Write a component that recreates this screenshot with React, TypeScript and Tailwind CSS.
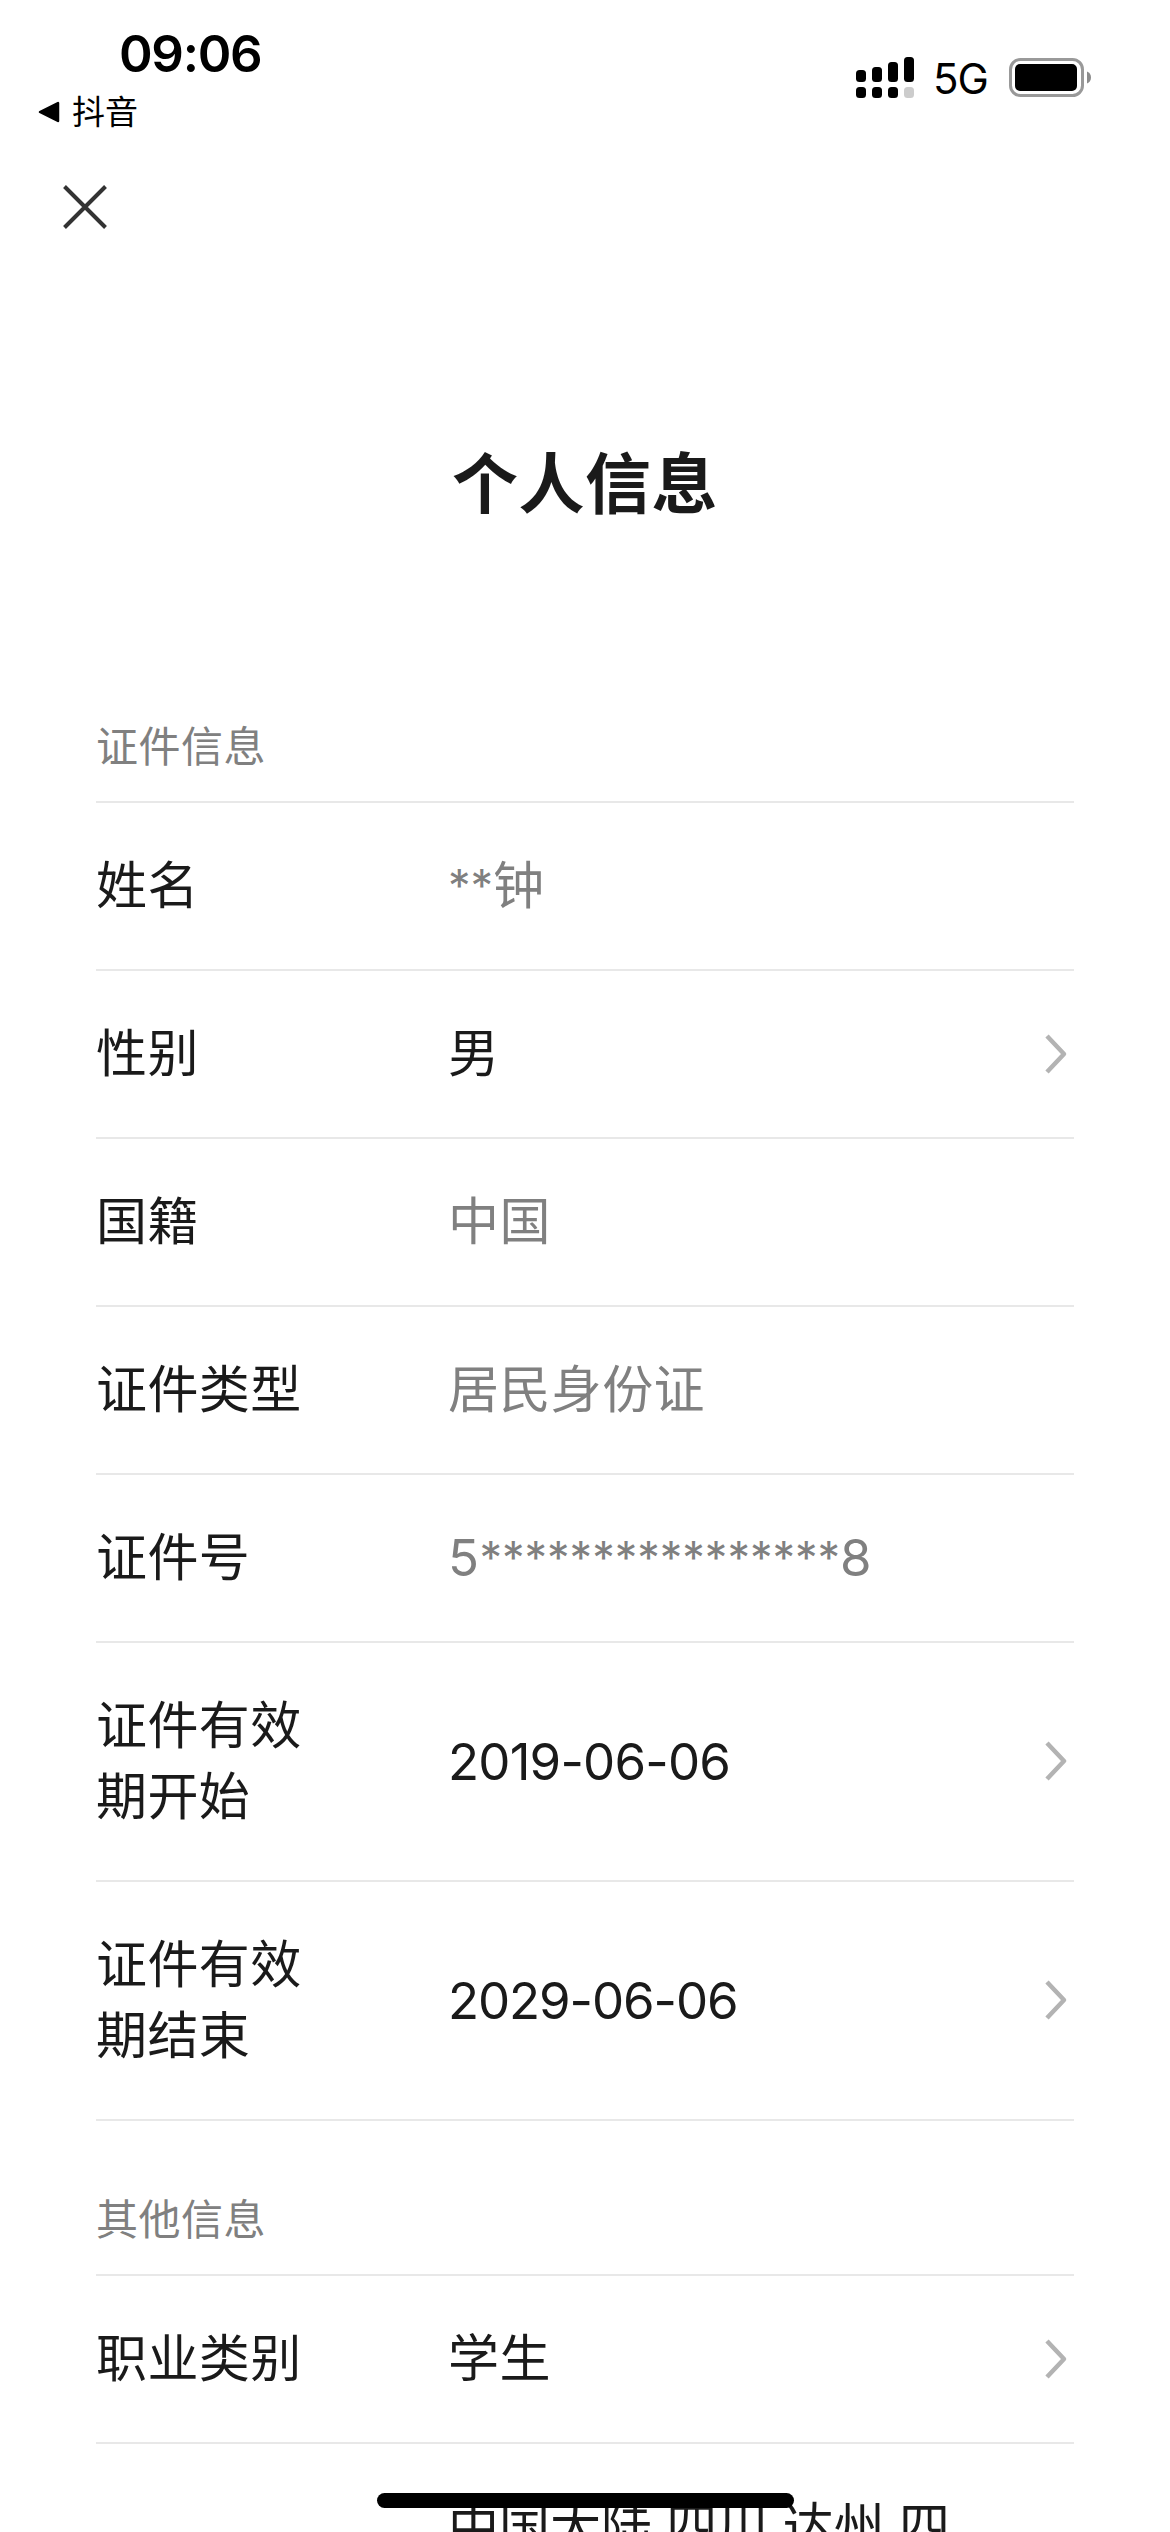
import clsx from 'clsx';

interface Field {
  label?: string;
  value: string;
  editable?: boolean;
  valueClass?: string;
}

interface Section {
  title: string;
  fields: Field[];
}

const sections: Section[] = [
  {
    title: '证件信息',
    fields: [
      { label: '姓名', value: '**钟', valueClass: 'tracking-[-1px]' },
      { label: '性别', value: '男', editable: true },
      { label: '国籍', value: '中国' },
      { label: '证件类型', value: '居民身份证' },
      { label: '证件号', value: '5****************8' },
      { label: '证件有效期开始', value: '2019-06-06', editable: true, valueClass: 'tracking-[-0.8px]' },
      { label: '证件有效期结束', value: '2029-06-06', editable: true, valueClass: 'tracking-[-1.1px]' },
    ],
  },
  {
    title: '其他信息',
    fields: [{ label: '职业类别', value: '学生', editable: true }],
  },
];

const signalHeights = [12, 15, 20, 25];

function SignalIcon() {
  return (
    <svg width="58" height="41" viewBox="0 0 58 41">
      {signalHeights.map((h, i) => (
        <g key={h}>
          <rect x={i * 16} y={25 - h} width="10" height={h} rx="3.5" fill="#000" />
          <rect x={i * 16} y="30" width="10" height="11" rx="3.5" fill={i === 3 ? '#ccc' : '#000'} />
        </g>
      ))}
    </svg>
  );
}

function BatteryIcon() {
  return (
    <svg width="82" height="39" viewBox="0 0 82 39">
      <rect x="1.5" y="1.5" width="72" height="36" rx="10" fill="none" stroke="#999" strokeWidth="3" />
      <rect x="6" y="6" width="62" height="27" rx="5" fill="#000" />
      <path d="M78 13.500c2.600 1 4 3.300 4 6s-1.400 5-4 6z" fill="#8c8c8c" />
    </svg>
  );
}

function StatusBar() {
  return (
    <header className="flex h-[150px] justify-between pl-[38px] pr-[79px]">
      <div className="flex flex-col">
        <span className="ml-[81px] mt-[24px] font-[Inter] text-[51px] font-semibold leading-[60px] tracking-[-1.3px] text-black">
          09:06
        </span>
        <div className="mt-[8px] flex h-[40px] items-center text-[33px] leading-[40px] text-black">
          <svg className="mr-[12px]" width="22" height="22" viewBox="0 0 22 22">
            <path d="M2 11 20 2v18z" stroke="#000" strokeWidth="2.500" strokeLinejoin="round" />
          </svg>
          抖音
        </div>
      </div>
      <div className="flex items-start pt-[57px]">
        <SignalIcon />
        <span className="ml-[19px] mt-[2px] w-[60px] font-[Inter] text-[42px] leading-[40px] tracking-[-1px] text-black">
          5G
        </span>
        <div className="ml-[16px] mt-[1px]">
          <BatteryIcon />
        </div>
      </div>
    </header>
  );
}

function ChevronIcon() {
  return (
    <svg className="mr-[6px]" width="24" height="42" viewBox="0 0 24 42">
      <path d="M3 3l17 18L3 39" fill="none" stroke="#b3b3b3" strokeWidth="4.500" strokeLinejoin="round" />
    </svg>
  );
}

// runs of asterisks are set smaller than the characters they hide
function MaskedText({ text }: { text: string }) {
  return text.split(/(\*+)/).map((part, i) =>
    part.startsWith('*') ? (
      <span key={i} className="align-[2px] text-[45px] leading-none tracking-[0px]">
        {part}
      </span>
    ) : (
      part
    ),
  );
}

function FieldRow({ label, value, editable = false, valueClass }: Field) {
  return (
    <div className="flex items-center border-b-2 border-[#e8e8e8] pb-[48px] pt-[47px] text-[51px] leading-[71px] tracking-[0.4px] text-[#1a1a1a]">
      <div className="w-[352px] shrink-0 pr-[140px]">{label}</div>
      <div className={clsx('flex-1', !editable && 'text-[#808080]', valueClass)}>
        <MaskedText text={value} />
      </div>
      {editable && <ChevronIcon />}
    </div>
  );
}

function SectionTitle({ title }: { title: string }) {
  return (
    <h2 className="border-b-2 border-[#e8e8e8] pb-[24px] text-[42px] leading-[60px] tracking-[0.5px] text-[#808080]">
      {title}
    </h2>
  );
}

export default function App() {
  return (
    <div className="relative h-[2532px] w-[1170px] overflow-hidden bg-white font-['Inter','Noto_Sans_CJK_SC',sans-serif]">
      <StatusBar />
      <nav className="flex h-[113px] items-center pl-[62px]">
        <button type="button" aria-label="关闭">
          <svg width="46" height="46" viewBox="0 0 46 46">
            <path d="M2.500 2.500l41 41m0-41l-41 41" stroke="#333" strokeWidth="4" />
          </svg>
        </button>
      </nav>
      <h1 className="mt-[175px] text-center text-[66px] font-semibold leading-[92px] tracking-[0.5px] text-[#1a1a1a]">
        个人信息
      </h1>
      <main className="mt-[187px] pl-[96px] pr-[96px]">
        {sections.map((section, i) => (
          <section key={section.title} className={clsx(i > 0 && 'mt-[69px]')}>
            <SectionTitle title={section.title} />
            {section.fields.map((field) => (
              <FieldRow key={field.label} {...field} />
            ))}
          </section>
        ))}
        <p className="ml-[352px] whitespace-nowrap pt-[47px] text-[51px] leading-[71px] text-[#1a1a1a]">
          中国大陆 四川 达州 四
        </p>
      </main>
      {/* home indicator */}
      <div className="absolute left-[377px] top-[2493px] h-[15px] w-[417px] rounded-full bg-black" />
    </div>
  );
}
